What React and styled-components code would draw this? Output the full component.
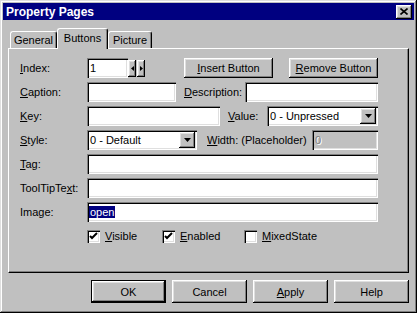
import React from 'react'
import styled, { createGlobalStyle } from 'styled-components'

const GlobalStyle = createGlobalStyle`
  html, body {
    margin: 0;
    padding: 0;
    background: #c0c0c0;
  }
  * {
    box-sizing: border-box;
  }
`

const raised = `
  box-shadow: inset -1px -1px #000, inset 1px 1px #fff,
    inset -2px -2px #808080, inset 2px 2px #dfdfdf;
`

const sunken = `
  box-shadow: inset 1px 1px #808080, inset 2px 2px #000,
    inset -1px -1px #fff, inset -2px -2px #dfdfdf;
`

const Window = styled.div`
  width: 417px;
  height: 313px;
  padding: 3px;
  background: #c0c0c0;
  box-shadow: inset -1px -1px #000, inset 1px 1px #dfdfdf,
    inset -2px -2px #808080, inset 2px 2px #fff;
  font-family: "Liberation Sans", Arial, sans-serif;
  font-size: 11px;
  color: #000;
  display: flex;
  flex-direction: column;
`

const TitleBar = styled.div`
  height: 17px;
  display: flex;
  align-items: center;
  justify-content: space-between;
  padding: 0 2px 0 3px;
  background: #000080;
  color: #fff;
  font-weight: bold;
  font-size: 12px;
`

const CloseButton = styled.div`
  width: 16px;
  height: 14px;
  background: #c0c0c0;
  display: flex;
  align-items: center;
  justify-content: center;
  ${raised}
`

const Body = styled.div`
  flex: 1;
  display: flex;
  flex-direction: column;
  padding: 8px 5px 7px;
`

const Tabs = styled.div`
  height: 20px;
  display: flex;
  align-items: flex-end;
  padding-left: 2px;
  position: relative;
  z-index: 1;
`

const Tab = styled.div`
  width: ${p => p.$w}px;
  height: ${p => (p.$active ? 21 : 17)}px;
  margin-bottom: ${p => (p.$active ? -1 : 0)}px;
  background: #c0c0c0;
  border-top: 1px solid #fff;
  border-left: 1px solid #fff;
  border-right: 1px solid #000;
  border-radius: 3px 3px 0 0;
  box-shadow: inset -1px 0 #808080;
  display: flex;
  align-items: center;
  justify-content: center;
  padding-bottom: ${p => (p.$active ? 2 : 0)}px;
`

const Panel = styled.div`
  height: 225px;
  border-top: 1px solid #fff;
  border-left: 1px solid #fff;
  border-right: 1px solid #000;
  border-bottom: 1px solid #000;
  box-shadow: inset -1px -1px #808080;
  padding: 9px 0 0 11px;
  display: flex;
  flex-direction: column;
  gap: 4px;
`

const Row = styled.div`
  height: 20px;
  display: flex;
  align-items: center;
`

const Label = styled.div`
  width: ${p => p.$w || 67}px;
  flex-shrink: 0;
  margin-left: ${p => p.$ml || 0}px;
  white-space: nowrap;
`

const U = styled.span`
  text-decoration: underline;
`

const Field = styled.div`
  width: ${p => p.$w}px;
  flex-shrink: 0;
  height: 20px;
  margin-left: ${p => p.$ml || 0}px;
  background: ${p => (p.$disabled ? '#c0c0c0' : '#fff')};
  color: ${p => (p.$disabled ? '#808080' : '#000')};
  text-shadow: ${p => (p.$disabled ? '1px 1px #fff' : 'none')};
  display: flex;
  align-items: center;
  padding: 0 2px 0 3px;
  white-space: nowrap;
  ${sunken}
`

const Selected = styled.span`
  background: #000080;
  color: #fff;
  padding: 0 1px;
  margin-left: -1px;
`

const SelectText = styled.div`
  flex: 1;
`

const DropButton = styled.div`
  width: 16px;
  height: 16px;
  background: #c0c0c0;
  display: flex;
  align-items: center;
  justify-content: center;
  ${raised}
`

const SpinButton = styled.div`
  width: 8px;
  height: 17px;
  margin-left: ${p => p.$ml || 0}px;
  background: #c0c0c0;
  display: flex;
  align-items: center;
  justify-content: center;
  ${raised}
`

const Button = styled.div`
  width: ${p => p.$w}px;
  height: ${p => p.$h || 20}px;
  flex-shrink: 0;
  margin-left: ${p => p.$ml || 0}px;
  background: #c0c0c0;
  display: flex;
  align-items: center;
  justify-content: center;
  white-space: nowrap;
  ${raised}
  ${p =>
    p.$default &&
    `box-shadow: inset 0 0 0 1px #000, inset -2px -2px #000, inset 2px 2px #fff,
      inset -3px -3px #808080, inset 3px 3px #dfdfdf;`}
`

const CheckItem = styled.div`
  width: ${p => p.$w}px;
  display: flex;
  align-items: center;
  gap: 5px;
`

const Box = styled.div`
  width: 13px;
  height: 13px;
  background: #fff;
  display: flex;
  align-items: center;
  justify-content: center;
  ${sunken}
`

const Footer = styled.div`
  margin-top: 7px;
  display: flex;
  justify-content: flex-end;
  gap: 6px;
`

const DownArrow = () => (
  <svg width="7" height="4" viewBox="0 0 7 4">
    <path d="M0 0h7L3.5 4z" fill="#000" />
  </svg>
)

const SpinArrow = ({ dir }) => (
  <svg width="3" height="5" viewBox="0 0 3 5">
    <path d={dir === 'left' ? 'M3 0v5L0 2.5z' : 'M0 0v5l3-2.5z'} fill="#000" />
  </svg>
)

const Checkbox = ({ checked, w, children }) => (
  <CheckItem $w={w}>
    <Box>
      {checked && (
        <svg width="9" height="9" viewBox="0 0 9 9">
          <path d="M1 4l2 2 5-5" stroke="#000" strokeWidth="2" fill="none" />
        </svg>
      )}
    </Box>
    <span>{children}</span>
  </CheckItem>
)

const Select = ({ w, children }) => (
  <Field $w={w}>
    <SelectText>{children}</SelectText>
    <DropButton>
      <DownArrow />
    </DropButton>
  </Field>
)

export default function App() {
  return (
    <>
      <GlobalStyle />
      <Window>
        <TitleBar>
          <span>Property Pages</span>
          <CloseButton>
            <svg width="8" height="7" viewBox="0 0 8 7">
              <path d="M0.5 0.5l7 6M7.5 0.5l-7 6" stroke="#000" strokeWidth="1.6" />
            </svg>
          </CloseButton>
        </TitleBar>
        <Body>
          <Tabs>
            <Tab $w={47}>General</Tab>
            <Tab $w={51} $active>Buttons</Tab>
            <Tab $w={44}>Picture</Tab>
          </Tabs>
          <Panel>
            <Row>
              <Label><U>I</U>ndex:</Label>
              <Field $w={41}>1</Field>
              <SpinButton><SpinArrow dir="left" /></SpinButton>
              <SpinButton $ml={1}><SpinArrow dir="right" /></SpinButton>
              <Button $w={89} $ml={39}><U>I</U>nsert Button</Button>
              <Button $w={89} $ml={16}><U>R</U>emove Button</Button>
            </Row>
            <Row>
              <Label><U>C</U>aption:</Label>
              <Field $w={89} />
              <Label $w={61} $ml={8}><U>D</U>escription:</Label>
              <Field $w={133} />
            </Row>
            <Row>
              <Label><U>K</U>ey:</Label>
              <Field $w={133} />
              <Label $w={39} $ml={8}><U>V</U>alue:</Label>
              <Select w={111}>0 - Unpressed</Select>
            </Row>
            <Row>
              <Label><U>S</U>tyle:</Label>
              <Select w={110}>0 - Default</Select>
              <Label $w={105} $ml={10}><U>W</U>idth: (Placeholder)</Label>
              <Field $w={66} $disabled>0</Field>
            </Row>
            <Row>
              <Label><U>T</U>ag:</Label>
              <Field $w={291} />
            </Row>
            <Row>
              <Label>ToolTipTe<U>x</U>t:</Label>
              <Field $w={291} />
            </Row>
            <Row>
              <Label>Image:</Label>
              <Field $w={291}><Selected>open</Selected></Field>
            </Row>
            <Row>
              <Label />
              <Checkbox checked w={75}><U>V</U>isible</Checkbox>
              <Checkbox checked w={82}><U>E</U>nabled</Checkbox>
              <Checkbox w={100}><U>M</U>ixedState</Checkbox>
            </Row>
          </Panel>
          <Footer>
            <Button $w={75} $h={23} $default>OK</Button>
            <Button $w={75} $h={23}>Cancel</Button>
            <Button $w={75} $h={23}><U>A</U>pply</Button>
            <Button $w={75} $h={23}>Help</Button>
          </Footer>
        </Body>
      </Window>
    </>
  )
}
